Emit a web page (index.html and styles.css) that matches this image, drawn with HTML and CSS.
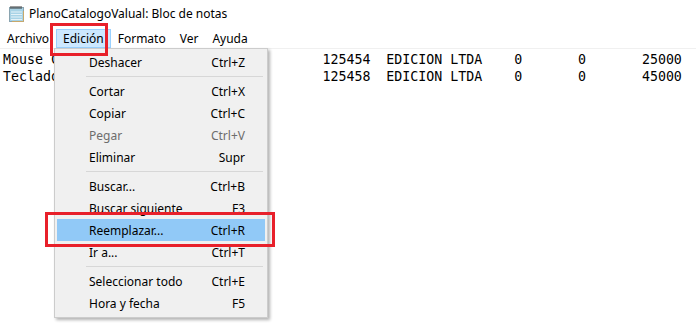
FILE: index.html
```html
<!DOCTYPE html>
<html lang="es">

<head>
    <meta charset="UTF-8">
    <meta name="viewport" content="width=device-width, initial-scale=1.0">
    <title>PlanoCatalogoValual: Bloc de notas</title>
    <link rel="stylesheet" href="styles.css">
</head>

<body>
    <div class="window">
        <div class="titlebar">
            <svg class="app-icon" width="17" height="17" viewBox="0 0 17 17">
                <rect x="1.5" y="2.5" width="14" height="14" fill="#bfe0ee" stroke="#8aa4b0"/>
                <rect x="2" y="3" width="13" height="13" fill="#a8d3e6"/>
                <path d="M3 7h11M3 9.5h11M3 12h11M3 14.5h11" stroke="#e4f2f8" stroke-width="1"/>
                <path d="M3 1v3M5 1v3M7 1v3M9 1v3M11 1v3M13 1v3" stroke="#3a3a3a" stroke-width="1"/>
                <path d="M15.5 6v10.5H4" stroke="#c9a86a" stroke-width="1" fill="none"/>
            </svg>
            <span class="title">PlanoCatalogoValual: Bloc de notas</span>
        </div>

        <div class="menubar">
            <span class="menu-item">Archivo</span>
            <span class="menu-item active">Edición</span>
            <span class="menu-item">Formato</span>
            <span class="menu-item">Ver</span>
            <span class="menu-item">Ayuda</span>
        </div>

        <pre class="editor">Mouse Con Cable USB                     125454  EDICION LTDA    0       0       25000
Teclado Multimedia USB                  125458  EDICION LTDA    0       0       45000</pre>

        <div class="dropdown">
            <div class="entry"><span>Deshacer</span><span class="key">Ctrl+Z</span></div>
            <div class="sep"></div>
            <div class="entry"><span>Cortar</span><span class="key">Ctrl+X</span></div>
            <div class="entry"><span>Copiar</span><span class="key">Ctrl+C</span></div>
            <div class="entry disabled"><span>Pegar</span><span class="key">Ctrl+V</span></div>
            <div class="entry"><span>Eliminar</span><span class="key">Supr</span></div>
            <div class="sep"></div>
            <div class="entry"><span>Buscar...</span><span class="key">Ctrl+B</span></div>
            <div class="entry"><span>Buscar siguiente</span><span class="key">F3</span></div>
            <div class="entry hover"><span>Reemplazar...</span><span class="key">Ctrl+R</span></div>
            <div class="entry"><span>Ir a...</span><span class="key">Ctrl+T</span></div>
            <div class="sep"></div>
            <div class="entry"><span>Seleccionar todo</span><span class="key">Ctrl+E</span></div>
            <div class="entry"><span>Hora y fecha</span><span class="key">F5</span></div>
        </div>

        <div class="mark mark-menu"></div>
        <div class="mark mark-entry"></div>
    </div>
</body>

</html>
```

FILE: styles.css
```css
body {
    margin: 0;
    background-color: white;
    font-family: "Noto Sans", sans-serif;
    font-size: 12px;
    color: #000;
}

.window {
    position: relative;
    width: 696px;
    height: 333px;
    overflow: hidden;
    background-color: white;
}

.titlebar {
    height: 29px;
    display: flex;
    align-items: center;
    padding-left: 8px;
    gap: 4px;
}

.app-icon {
    margin-top: -2px;
}

.title {
    color: #000;
    font-size: 12px;
    margin-top: -2px;
}

.menubar {
    height: 19px;
    display: flex;
    align-items: stretch;
    border-bottom: 1px solid #f0f0f0;
}

.menu-item {
    display: flex;
    align-items: center;
    padding: 0 6px;
    border: 1px solid transparent;
}

.menu-item.active {
    background-color: #cce8ff;
    border-color: #99d1ff;
}

.editor {
    margin: 0;
    padding: 2px 3px;
    font-family: "DejaVu Sans Mono", monospace;
    font-size: 13.28px;
    line-height: 17px;
    color: #000;
}

.dropdown {
    position: absolute;
    left: 54px;
    top: 48px;
    width: 208px;
    padding: 2px 2px 3px 2px;
    background-color: #f0f0f0;
    border: 1px solid #cccccc;
    box-shadow: 2px 2px 3px rgba(0, 0, 0, 0.3);
}

.entry {
    height: 22px;
    display: flex;
    align-items: center;
    justify-content: space-between;
    padding: 0 20px 0 32px;
}

.entry.disabled {
    color: #6d6d6d;
}

.entry.hover {
    background-color: #91c9f7;
}

.sep {
    height: 1px;
    margin: 3px 2px 3px 29px;
    background-color: #d7d7d7;
}

.mark {
    position: absolute;
    border: 3px solid #e8202a;
}

.mark-menu {
    left: 50px;
    top: 23px;
    width: 52px;
    height: 27px;
}

.mark-entry {
    left: 45px;
    top: 212px;
    width: 224px;
    height: 29px;
}
```
